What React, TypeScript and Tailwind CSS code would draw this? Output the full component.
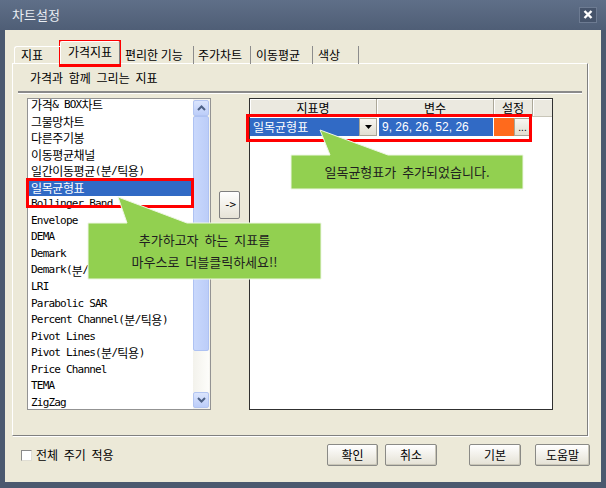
import React from "react";

const items = [
  "가격& BOX차트",
  "그물망차트",
  "다른주기봉",
  "이동평균채널",
  "일간이동평균(분/틱용)",
  "일목균형표",
  "Bollinger Band",
  "Envelope",
  "DEMA",
  "Demark",
  "Demark(분/틱용)",
  "LRI",
  "Parabolic SAR",
  "Percent Channel(분/틱용)",
  "Pivot Lines",
  "Pivot Lines(분/틱용)",
  "Price Channel",
  "TEMA",
  "ZigZag",
];

function splitRuns(t: string) {
  const parts = t.match(/[\uac00-\ud7a3]+|[^\uac00-\ud7a3]+/g) || [];
  return parts.map((p, i) =>
    /[\uac00-\ud7a3]/.test(p) ? (
      <span key={i} className="text-[12px] tracking-[-0.4px] [font-family:'Noto_Sans_CJK_KR',sans-serif]">
        {p}
      </span>
    ) : (
      <span key={i}>{p}</span>
    )
  );
}

function Chevron({ up }: { up?: boolean }) {
  return (
    <svg width="9" height="6" viewBox="0 0 9 6">
      <polyline
        points={up ? "1,5 4.5,1.5 8,5" : "1,1 4.5,4.5 8,1"}
        fill="none"
        stroke="#4d6185"
        strokeWidth="2"
      />
    </svg>
  );
}

function WinButton({ label, w }: { label: string; w: string }) {
  return (
    <div
      className={`${w} h-[22px] flex items-center justify-center border border-[#8a8a86] rounded-[2px] bg-gradient-to-b from-white to-[#e4e1d4] shadow-[inset_-1px_-1px_0_#c9c6b8] text-[12px] text-black`}
    >
      {label}
    </div>
  );
}

export default function App() {
  return (
    <div className="relative w-[606px] h-[488px] bg-[#4b596f] flex flex-col overflow-hidden text-[12px] text-black [font-family:'Noto_Sans_CJK_KR',sans-serif]">
      {/* Title bar */}
      <div className="h-[30px] flex items-center justify-between pl-[12px] pr-[9px] bg-gradient-to-b from-[#5f6f88] to-[#4f5e76]">
        <span className="text-[#e9edf3] text-[13px] leading-none -mt-[1px]">차트설정</span>
        <div className="w-[18px] h-[16px] -mt-[1px] bg-[#46546b] border border-[#6d7b92] flex items-center justify-center">
          <svg width="10" height="9" viewBox="0 0 10 9">
            <path d="M1.5 1 L8.5 8 M8.5 1 L1.5 8" stroke="#ffffff" strokeWidth="2.4" />
          </svg>
        </div>
      </div>

      {/* Body */}
      <div className="mx-[5px] h-[452px] bg-[#ece9d8] flex flex-col">
        {/* Tabs */}
        <div className="mt-[12px] ml-[9px] h-[22px] flex items-end -mb-[1px] relative z-10">
          <div className="w-[46px] h-[18px] border-t border-l border-white rounded-tl-[3px] flex items-center pl-[6px] pb-[1px]">
            지표
          </div>
          <div className="w-[60px] h-[23px] bg-[#ece9d8] border-t border-l border-r border-t-white border-l-white border-r-[#808080] rounded-t-[2px] flex items-center justify-center pb-[2px]">
            가격지표
          </div>
          <div className="w-[74px] h-[18px] flex items-center pl-[5px] border-r border-[#8c8c8c] pb-[1px]">
            편리한 기능
          </div>
          <div className="w-[57px] h-[18px] flex items-center pl-[4px] border-r border-[#8c8c8c] pb-[1px]">
            주가차트
          </div>
          <div className="w-[62px] h-[18px] flex items-center pl-[5px] border-r border-[#8c8c8c] pb-[1px]">
            이동평균
          </div>
          <div className="w-[46px] h-[18px] flex items-center pl-[5px] border-r border-[#8c8c8c] pb-[1px]">
            색상
          </div>
        </div>

        {/* Panel */}
        <div className="ml-[7px] w-[576px] h-[373px] border border-t-white border-l-white border-r-[#808080] border-b-[#808080] shadow-[1px_1px_0_#ffffff] flex flex-col">
          <div className="h-[27px] flex items-center pl-[17px] [word-spacing:3px]">가격과 함께 그리는 지표</div>
          <div className="mx-[5px] h-[3px] border-t-2 border-t-[#8a8a8a] border-b border-b-white" />

          <div className="mt-[4px] ml-[14px] h-[312px] flex">
            {/* List */}
            <div className="w-[184px] h-[312px] border border-[#939393] bg-white flex">
              <div className="flex-1 overflow-hidden">
                <div className="-mt-[2px] [font-family:'DejaVu_Sans_Mono','Noto_Sans_CJK_KR',monospace] text-[11px] tracking-[-0.8px]">
                  {items.map((t, i) => (
                    <div
                      key={t}
                      className={`h-[16.55px] flex items-center pl-[3px] whitespace-nowrap ${
                        i === 5 ? "bg-[#316ac5] text-white" : "text-black"
                      }`}
                    >
                      {splitRuns(t)}
                    </div>
                  ))}
                </div>
              </div>
              {/* Scrollbar */}
              <div className="w-[17px] h-full flex flex-col py-[1px] pr-[1px] bg-[#f5f4ef]">
                <div className="h-[16px] rounded-[2px] border border-[#b3c5f1] bg-gradient-to-b from-[#dbe5fd] to-[#bccdf9] flex items-center justify-center">
                  <Chevron up />
                </div>
                <div className="h-[235px] rounded-[2px] border border-[#aec2f3] bg-gradient-to-r from-[#c9d8fc] to-[#bccdf8]" />
                <div className="flex-1 bg-gradient-to-r from-[#f3f2ec] to-[#fdfdfa]" />
                <div className="h-[16px] rounded-[2px] border border-[#b3c5f1] bg-gradient-to-b from-[#dbe5fd] to-[#bccdf9] flex items-center justify-center">
                  <Chevron />
                </div>
              </div>
            </div>

            {/* Arrow button column */}
            <div className="w-[38px] flex flex-col">
              <div className="mt-[93px] ml-[8px] w-[21px] h-[28px] border border-[#7f7f7f] rounded-[2px] bg-gradient-to-b from-white to-[#e6e3d6] flex items-center justify-center text-[11px] [font-family:'DejaVu_Sans_Mono',monospace] tracking-[-1px]">
                -&gt;
              </div>
            </div>

            {/* Grid */}
            <div className="w-[304px] h-[312px] border border-[#303030] bg-white flex flex-col">
              <div className="h-[18px] flex bg-[#ebe9e0] border-b border-[#c8c5b8]">
                <div className="w-[127px] flex items-center justify-center border-r border-[#aca899] shadow-[inset_1px_1px_0_#fff]">
                  지표명
                </div>
                <div className="w-[117px] flex items-center justify-center border-r border-[#aca899] shadow-[inset_1px_1px_0_#fff]">
                  변수
                </div>
                <div className="w-[39px] flex items-center justify-center border-r border-[#aca899] shadow-[inset_1px_1px_0_#fff]">
                  설정
                </div>
                <div className="flex-1 shadow-[inset_1px_1px_0_#fff]" />
              </div>
              <div className="mt-[1px] h-[18px] flex">
                <div className="w-[109px] bg-[#316ac5] text-white flex items-center pl-[3px]">일목균형표</div>
                <div className="w-[18px] bg-gradient-to-b from-[#f7f6f1] to-[#e2dfd2] border border-[#a8a596] flex items-center justify-center">
                  <svg width="7" height="4" viewBox="0 0 7 4">
                    <polygon points="0,0 7,0 3.5,4" fill="#000" />
                  </svg>
                </div>
                <div className="w-[117px] pl-[2px] pr-[1px] flex">
                  <div className="flex-1 bg-[#316ac5] text-white flex items-center pl-[3px] text-[12px] [font-family:'Liberation_Sans',sans-serif]">
                    9, 26, 26, 52, 26
                  </div>
                </div>
                <div className="w-[20px] bg-[#ff6a1c]" />
                <div className="w-[17px] bg-gradient-to-b from-[#f7f6f1] to-[#e2dfd2] border border-[#a8a596] flex items-end justify-center pb-[2px] text-[10px] leading-none [font-family:'Liberation_Sans',sans-serif]">
                  ...
                </div>
              </div>
            </div>
          </div>
        </div>

        {/* Bottom row */}
        <div className="mt-[8px] h-[22px] flex items-center pl-[16px] pr-[11px]">
          <div className="w-[11px] h-[11px] bg-white border border-t-[#8a8a8a] border-l-[#8a8a8a] border-r-[#e0ded4] border-b-[#e0ded4]" />
          <span className="ml-[4px] [word-spacing:3px]">전체 주기 적용</span>
          <div className="ml-auto flex items-center">
            <WinButton label="확인" w="w-[51px]" />
            <div className="w-[7px]" />
            <WinButton label="취소" w="w-[52px]" />
            <div className="w-[32px]" />
            <WinButton label="기본" w="w-[52px]" />
            <div className="w-[14px]" />
            <WinButton label="도움말" w="w-[55px]" />
          </div>
        </div>
      </div>

      {/* Red highlight boxes */}
      <div className="absolute left-[59px] top-[40px] w-[62px] h-[27px] border-[3px] border-[#ff0000]" />
      <div className="absolute left-[26px] top-[178px] w-[168px] h-[30px] border-[3px] border-[#ff0000]" />
      <div className="absolute left-[246px] top-[114px] w-[286px] h-[28px] border-[3px] border-[#ff0000]" />

      {/* Callout 1 */}
      <div className="absolute left-[87px] top-[196px] w-[236px] h-[85px]">
        <svg width="236" height="85" viewBox="0 0 236 85" className="absolute inset-0">
          <polygon
            points="1,27 40,27 31,1 100,27 234,27 234,83 1,83"
            fill="#92d050"
            stroke="#eef7e4"
            strokeWidth="1"
          />
        </svg>
        <div className="absolute left-[1px] top-[27px] w-[233px] h-[56px] flex flex-col items-center justify-center text-[13px] leading-[22px] text-[#202020] [word-spacing:3px]">
          <div>추가하고자 하는 지표를</div>
          <div>마우스로 더블클릭하세요!!</div>
        </div>
      </div>

      {/* Callout 2 */}
      <div className="absolute left-[290px] top-[129px] w-[235px] h-[62px]">
        <svg width="235" height="62" viewBox="0 0 235 62" className="absolute inset-0">
          <polygon
            points="1,26 40,26 30,1 98,26 233,26 233,60 1,60"
            fill="#92d050"
            stroke="#eef7e4"
            strokeWidth="1"
          />
        </svg>
        <div className="absolute left-[1px] top-[26px] w-[232px] h-[34px] flex items-center justify-center text-[13px] text-[#202020] [word-spacing:3px]">
          일목균형표가 추가되었습니다.
        </div>
      </div>
    </div>
  );
}
